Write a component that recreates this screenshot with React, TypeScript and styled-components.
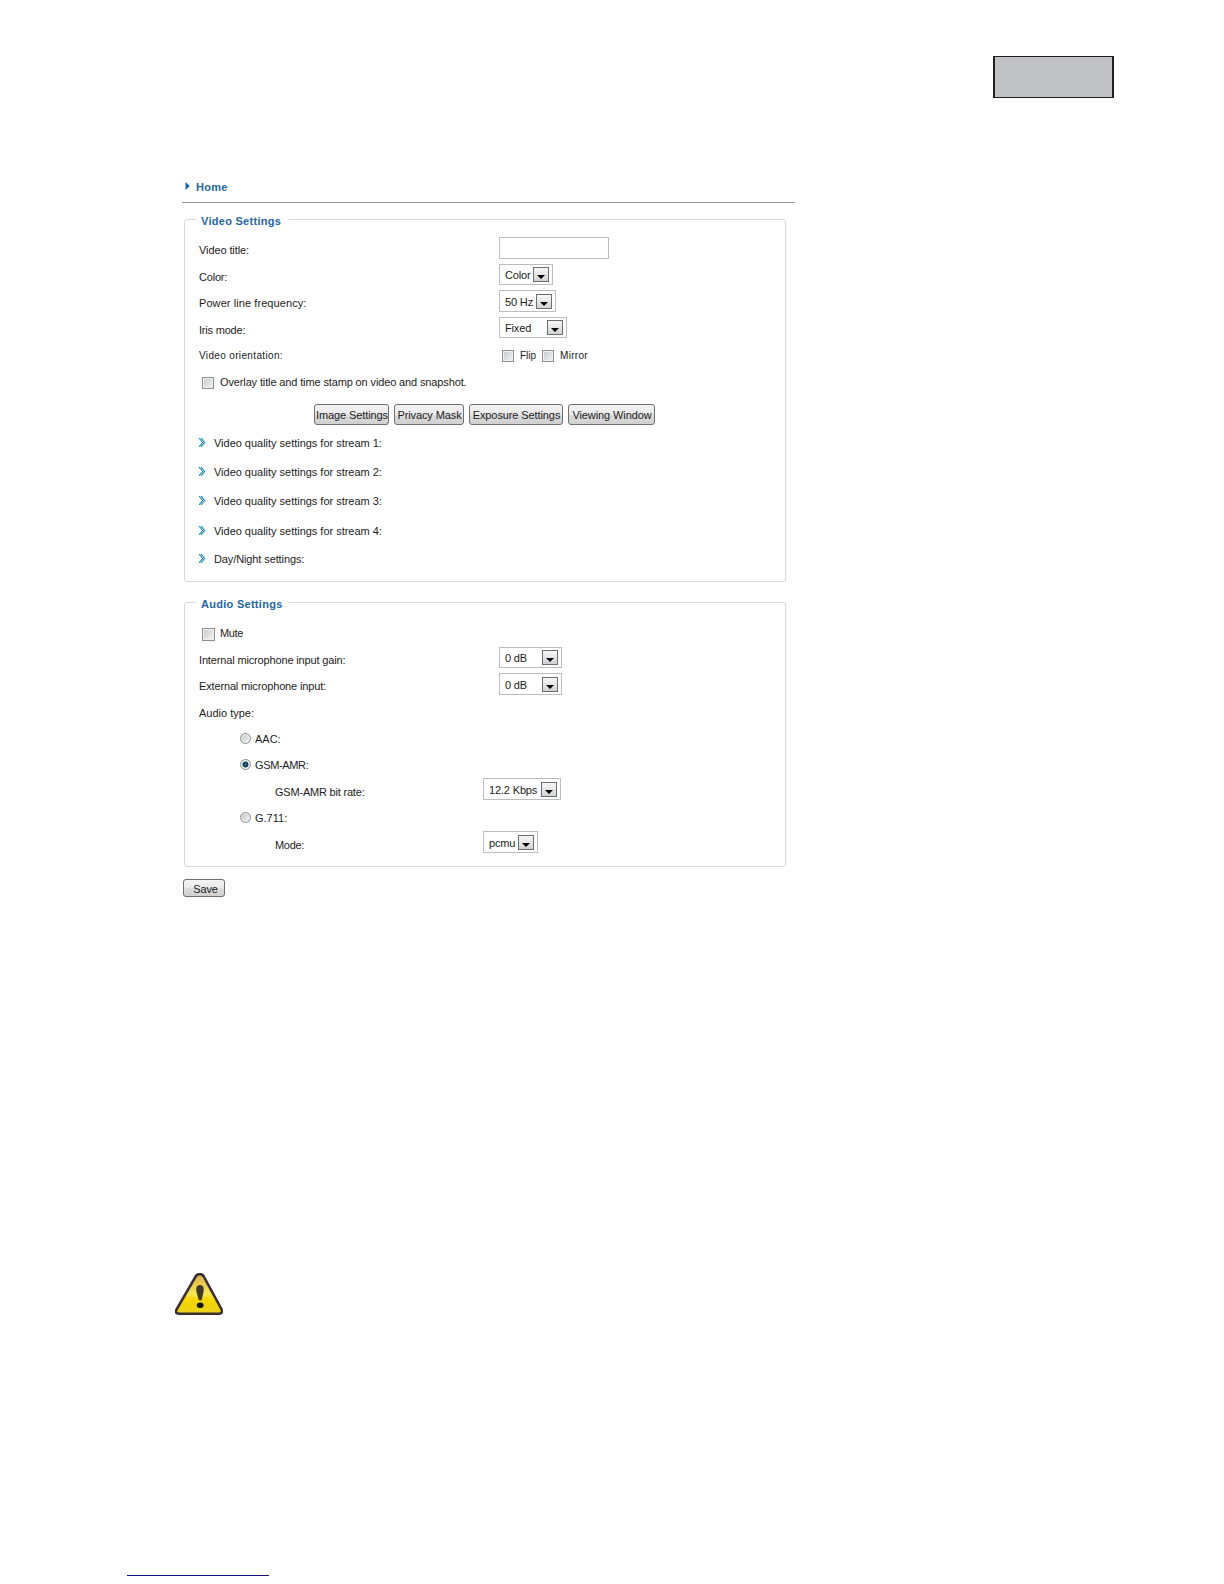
import React from 'react'
import styled, { createGlobalStyle } from 'styled-components'

const colors = {
  BLUE: '#1f66a5',
  TEXT: '#1c1c1c',
  BORDER: '#d8dadb',
  INPUT_BORDER: '#bdbdbd',
}

const GlobalStyle = createGlobalStyle`
  body {
    margin: 0;
    background: #fff;
    color: ${colors.TEXT};
    font-family: 'Liberation Sans', Arial, sans-serif;
    font-size: 11px;
    line-height: 14px;
  }
  * {
    box-sizing: border-box;
  }
`

const Page = styled.div`
  display: flex;
  flex-direction: column;
  width: 1224px;
  height: 1584px;
  overflow: hidden;
`

const Header = styled.header`
  display: flex;
  justify-content: flex-end;
  height: 180px;
  padding: 56px 110px 0 0;
`

const LanguageBox = styled.div`
  width: 121px;
  height: 42px;
  background: #c1c2c4;
  border: solid #231f20;
  border-width: 1px 2px;
`

const Content = styled.main`
  display: flex;
  flex-direction: column;
  width: 613px;
  margin-left: 182px;
`

const Breadcrumb = styled.div`
  display: flex;
  height: 23px;
  padding-left: 3px;
  color: ${colors.BLUE};
  font-weight: 700;
  letter-spacing: 0.3px;
  border-bottom: 1px solid #999;

  svg {
    margin: 2px 6px 0 0;
  }
`

const Panel = styled.section<{ $top: number }>`
  width: 602px;
  margin: ${(props) => props.$top}px 0 0 2px;
  border: 1px solid ${colors.BORDER};
  border-radius: 3px;
`

const Legend = styled.h2`
  width: 93px;
  margin: -6px 0 8px 11px;
  padding-left: 5px;
  background: #fff;
  color: ${colors.BLUE};
  font-size: 11px;
  font-weight: 700;
  letter-spacing: 0.28px;
  white-space: nowrap;
`

const Row = styled.div<{ $height: number; $indent?: number }>`
  display: flex;
  align-items: flex-start;
  height: ${(props) => props.$height}px;
  padding-left: ${(props) => props.$indent ?? 14}px;
`

const Label = styled.span<{ $width?: number; $spacing?: number }>`
  flex: none;
  width: ${(props) => (props.$width ? `${props.$width}px` : 'auto')};
  padding-top: 7px;
  letter-spacing: ${(props) => props.$spacing ?? 0}px;
  white-space: nowrap;
`

const SmallLabel = styled(Label)`
  padding-top: 8px;
  font-size: 10px;
`

const TextInput = styled.input`
  width: 110px;
  height: 22px;
  margin-top: 1px;
  background: #fff;
  border: 1px solid ${colors.INPUT_BORDER};
`

const SelectBox = styled.div<{ $width: number; $tall?: boolean; $top?: number }>`
  display: flex;
  justify-content: space-between;
  width: ${(props) => props.$width}px;
  height: ${(props) => (props.$tall ? 22 : 21)}px;
  margin-top: ${(props) => props.$top ?? 1}px;
  padding: ${(props) => (props.$tall ? 3 : 2)}px 3px 0 5px;
  border: 1px solid ${colors.INPUT_BORDER};
  letter-spacing: -0.15px;
  white-space: nowrap;

  span {
    padding-top: 1px;
  }
`

const ArrowButton = styled.div`
  display: flex;
  flex: none;
  justify-content: center;
  width: 16px;
  height: 15px;
  padding-top: 7px;
  background: linear-gradient(#f6f6f6, #e6e6e6 50%, #d0d2d4);
  border: 1px solid #6b6d70;
`

const Checkbox = styled.span<{ $size?: number; $left?: number; $right?: number; $top?: number }>`
  flex: none;
  width: ${(props) => props.$size ?? 12}px;
  height: ${(props) => props.$size ?? 12}px;
  margin: ${(props) => props.$top ?? 9}px ${(props) => props.$right ?? 6}px 0
    ${(props) => props.$left ?? 3}px;
  background: linear-gradient(135deg, #c6c8ca, #f4f4f4);
  border: 1px solid #8e8f8f;
  box-shadow: inset 0 0 0 1px #f0f0f0;
`

const Radio = styled.span<{ $checked?: boolean }>`
  flex: none;
  width: 11px;
  height: 11px;
  margin: 8px 4px 0 0;
  border: 1px solid #8e8f8f;
  border-radius: 50%;
  background: ${(props) =>
    props.$checked
      ? 'radial-gradient(circle, #3f8fb5 0, #123a5c 1.6px, #123a5c 2.6px, #e6eef2 3.4px)'
      : 'linear-gradient(135deg, #bfc1c3, #f6f6f6)'};
  box-shadow: inset 0 0 0 1px #eee;
`

const ButtonBar = styled.div`
  display: flex;
  gap: 5px;
  height: 25px;
  padding-left: 129px;
`

const Button = styled.button<{ $width: number; $height?: number }>`
  width: ${(props) => props.$width}px;
  height: ${(props) => props.$height ?? 21}px;
  padding: 1px 0 0 1px;
  color: ${colors.TEXT};
  font: 11px/14px 'Liberation Sans', Arial, sans-serif;
  letter-spacing: -0.1px;
  white-space: nowrap;
  background: linear-gradient(#f3f3f3, #e9e9e9 50%, #dcdcdc 50%, #d0d0d0);
  border: 1px solid #707070;
  border-radius: 3px;
`

const SaveButton = styled(Button)`
  margin: 12px 0 0 1px;
  padding: 1px 0 0 3px;
`

const Warning = styled.div`
  margin: 376px 0 0 175px;
  height: 42px;
`

const FootLine = styled.div`
  width: 142px;
  height: 1px;
  margin: 260px 0 0 127px;
  background: #14148c;
`

const ChevronIcon = styled.svg`
  flex: none;
  margin-top: 9px;
`

const CHEVRON_DOTS = [
  [0, 0], [2, 0], [1, 1], [3, 1], [2, 2], [4, 2], [3, 3], [5, 3],
  [2, 4], [4, 4], [1, 5], [3, 5], [0, 6], [2, 6],
]

function Chevron() {
  return (
    <ChevronIcon width="15" height="9" viewBox="0 0 15 9">
      {CHEVRON_DOTS.map(([x, y]) => (
        <rect key={`${x}-${y}`} x={x} y={y * 1.25} width="1.3" height="1.4" fill="#1f87b0" />
      ))}
    </ChevronIcon>
  )
}

interface ISelect {
  value: string
  width: number
  tall?: boolean
  top?: number
}

function Select({ value, width, tall, top }: ISelect) {
  return (
    <SelectBox $width={width} $tall={tall} $top={top}>
      <span>{value}</span>
      <ArrowButton>
        <svg width="8" height="4" viewBox="0 0 8 4">
          <path d="M0 0H8L4 4Z" fill="#000" />
        </svg>
      </ArrowButton>
    </SelectBox>
  )
}

const streams = [
  { label: 'Video quality settings for stream 1:', height: 29, spacing: -0.02 },
  { label: 'Video quality settings for stream 2:', height: 29, spacing: -0.02 },
  { label: 'Video quality settings for stream 3:', height: 30, spacing: -0.02 },
  { label: 'Video quality settings for stream 4:', height: 28, spacing: -0.02 },
  { label: 'Day/Night settings:', height: 36, spacing: -0.11 },
]

function VideoSettings() {
  return (
    <Panel $top={16}>
      <Legend>Video Settings</Legend>
      <Row $height={27}>
        <Label $width={300} $spacing={-0.1}>Video title:</Label>
        <TextInput />
      </Row>
      <Row $height={26}>
        <Label $width={300} $spacing={-0.2}>Color:</Label>
        <Select value="Color" width={54} />
      </Row>
      <Row $height={27}>
        <Label $width={300} $spacing={0.08}>Power line frequency:</Label>
        <Select value="50 Hz" width={57} tall />
      </Row>
      <Row $height={25}>
        <Label $width={300} $spacing={-0.2}>Iris mode:</Label>
        <Select value="Fixed" width={68} />
      </Row>
      <Row $height={27}>
        <SmallLabel $width={300} $spacing={0.35}>Video orientation:</SmallLabel>
        <Checkbox />
        <SmallLabel $width={16}>Flip</SmallLabel>
        <Checkbox $left={6} />
        <SmallLabel $spacing={0.3}>Mirror</SmallLabel>
      </Row>
      <Row $height={36}>
        <Checkbox />
        <Label $spacing={-0.13}>Overlay title and time stamp on video and snapshot.</Label>
      </Row>
      <ButtonBar>
        <Button $width={75}>Image Settings</Button>
        <Button $width={70}>Privacy Mask</Button>
        <Button $width={94}>Exposure Settings</Button>
        <Button $width={87}>Viewing Window</Button>
      </ButtonBar>
      {streams.map((stream) => (
        <Row key={stream.label} $height={stream.height}>
          <Chevron />
          <Label $spacing={stream.spacing}>{stream.label}</Label>
        </Row>
      ))}
    </Panel>
  )
}

function AudioSettings() {
  return (
    <Panel $top={20}>
      <Legend>Audio Settings</Legend>
      <Row $height={27}>
        <Checkbox $size={13} $right={5} />
        <Label $spacing={-0.35}>Mute</Label>
      </Row>
      <Row $height={26}>
        <Label $width={300} $spacing={-0.15}>Internal microphone input gain:</Label>
        <Select value="0 dB" width={63} />
      </Row>
      <Row $height={27}>
        <Label $width={300} $spacing={-0.15}>External microphone input:</Label>
        <Select value="0 dB" width={63} tall />
      </Row>
      <Row $height={26}>
        <Label>Audio type:</Label>
      </Row>
      <Row $height={26} $indent={55}>
        <Radio />
        <Label>AAC:</Label>
      </Row>
      <Row $height={27} $indent={55}>
        <Radio $checked />
        <Label $spacing={-0.35}>GSM-AMR:</Label>
      </Row>
      <Row $height={26} $indent={90}>
        <Label $width={208} $spacing={-0.2}>GSM-AMR bit rate:</Label>
        <Select value="12.2 Kbps" width={78} tall top={0} />
      </Row>
      <Row $height={27} $indent={55}>
        <Radio />
        <Label>G.711:</Label>
      </Row>
      <Row $height={35} $indent={90}>
        <Label $width={208} $spacing={-0.3}>Mode:</Label>
        <Select value="pcmu" width={55} tall top={0} />
      </Row>
    </Panel>
  )
}

function WarningIcon() {
  return (
    <svg width="48" height="42" viewBox="0 0 48 42">
      <defs>
        <linearGradient id="sign" x1="0" y1="0" x2="0" y2="1">
          <stop offset="0" stopColor="#d9b04a" />
          <stop offset="0.5" stopColor="#f8e658" />
          <stop offset="0.65" stopColor="#f5d800" />
          <stop offset="1" stopColor="#ecd020" />
        </linearGradient>
      </defs>
      <path
        d="M21 2.8Q25 -0.8 28.5 3L46.4 36Q48.4 40.5 44 40.7H4Q-0.6 40.4 1.6 36.4Z"
        fill="url(#sign)"
        stroke="#3a3033"
        strokeWidth="2.6"
        strokeLinejoin="round"
      />
      <path
        d="M25 12C29 12 29.2 16 28.4 19.5L26.8 26.5Q25.2 28.6 23.6 26.5L21.6 19.5C20.8 16 21 12 25 12Z"
        fill="#3d3a28"
      />
      <ellipse cx="25.2" cy="32.3" rx="3.4" ry="2.8" fill="#17140c" />
    </svg>
  )
}

export default function App() {
  return (
    <Page>
      <GlobalStyle />
      <Header>
        <LanguageBox />
      </Header>
      <Content>
        <Breadcrumb>
          <svg width="5" height="8" viewBox="0 0 5 8">
            <path d="M0.5 0L4.8 4L0.5 8Z" fill={colors.BLUE} />
          </svg>
          Home
        </Breadcrumb>
        <VideoSettings />
        <AudioSettings />
        <SaveButton $width={42} $height={18}>Save</SaveButton>
      </Content>
      <Warning>
        <WarningIcon />
      </Warning>
      <FootLine />
    </Page>
  )
}
